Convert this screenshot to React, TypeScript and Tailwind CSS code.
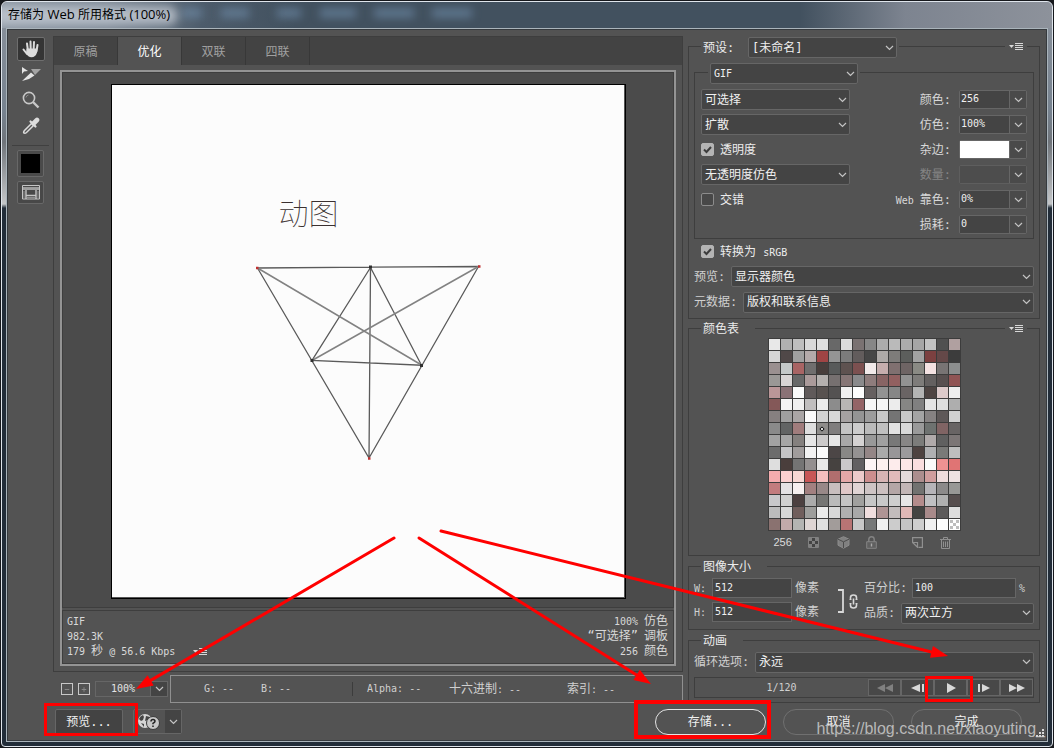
import { useId } from "react";
import type { ReactNode } from "react";

const SWATCHES = [
  "e8e8e8 b0b0b0 bebebe d8d8d8 dedede 686868 dcdcdc 7a7272 868686 acacac bababa acacac a6a6a6 c2c2c2 505050 b0a0a0",
  "d6d6d6 504848 a0a0a0 b4aaaa a04444 949494 7c7c7c 625c5c 464646 aeaaa8 7e7c7a 5c5e5c a2a2a2 7c4040 644848 3c3c3c",
  "9a9090 c4c8c8 a86464 706e6e 483e3c 585a5a 5e5250 7c5050 f2eaea c6aeae 807070 6e6464 8a8a84 f4e2e2 787474 8c8e8e",
  "9a9896 d8d4d4 686868 aa9a9a b4b0ae 767070 867676 8a8a8c 8e7c7c 886464 926060 929292 7e7c7a 646060 585050 905454",
  "ba9698 8a7276 fafafa 605a5a 585250 545252 f0f0f0 fdfdfd 666060 929292 868686 6a6464 b4b4b4 4e4442 dccaca eeeeee",
  "845858 f4f4f4 f0f0f0 c0bebe ebebeb 8c8c8c b8b6b4 946466 f6f6f6 f6f6f6 ececec 868684 808080 e4e4e4 dedede aeaeae",
  "868080 a0a0a0 aaa6a6 fbfbfb d2d2d2 d8d8d8 a6a2a2 949494 9c9c9c c8c8c8 747474 c8c8c8 a4a4a4 868282 5e5858 d0d0d0",
  "8a8a8a 626464 a07c7c dedede 8e8c8a 807e7e c4c4c4 cccccc bababa c0c0c0 e2e2e2 d8d8d8 9a9a9a 6e7270 806464 686464",
  "a2a2a2 a6a6a6 84807e e6e6e6 cccaca e6e6e6 a8a8a8 d4d2d2 989898 a0a0a0 787878 888686 7c7c7a b0aaaa 606060 7c7676",
  "6c6c6c c4c4c6 a09c9c f2f2f2 fafafa 4c4646 888886 949292 948686 aaaaaa 989698 9c9a9c 4e4240 b0b0b2 7a7a78 bebebe",
  "dedede 4a3e3c 747474 949090 e8e8e8 464240 cac8ca 626062 fdf5f5 fdf1ef fdecec fce6e6 fadedf fbfbfb ee9292 e07474",
  "f4acae fad0d0 f8d8d4 c85656 f4bebe b06e6e e4a8a8 eccaca cc8e8e d6b4b4 e0baba e4dada ac8e8e d09e9e eedcdc eee2e2",
  "c27c7e e4e2e4 f6f0f0 a28080 988888 c8bebe e0c8c8 e0d4d4 cec4c4 ccc0c0 b4a6a6 c2b6b6 727270 b6b4b8 8c8a8a 989896",
  "c8c8ca d0d0d0 4c4040 ababab 767674 bababa c4c4c4 a0a09e c6c6c6 c8c8c8 cecece e6e6e6 b48c8c c0c0c2 b0b0b0 564e4e",
  "bcbcbc d8d8d8 705e5c 9e9e9c ebebeb d8d8d8 b0b0b0 a8a8a8 f0dede ae9494 c2bcbc dfb8b6 444442 a88a8a 5c5a5a dedede",
  "8a7270 c2aaaa b4b4b2 dfd6d4 e0e0e0 a29c9a b87474 c8c8c8 767878 f0f0f0 cccccc c4c4c4 cecece f0f0f0 fdfdfd ffffff",
].flatMap((row) => row.split(" "));

const LOCKED = 7 * 16 + 4;

function Chevron() {
  return (
    <svg width="9" height="6" viewBox="0 0 9 6" fill="none" stroke="#c4c4c4" strokeWidth="1.2" aria-hidden>
      <path d="M1 1l3.5 3.5L8 1" />
    </svg>
  );
}

function Dropdown({ value, label, className = "", id }: { value: string; label?: string; className?: string; id?: string }) {
  const latin = /^[\x20-\x7e]+$/.test(value);
  return (
    <div className={`relative h-[21px] ${className}`}>
      <select
        id={id}
        aria-label={label}
        className={`block h-full w-full appearance-none rounded-xs border border-[#666] bg-[#444] pr-4 pl-[3px] text-[#f0f0f0] outline-none ${latin ? "text-[10px]" : "text-xs"}`}
      >
        <option>{value}</option>
      </select>
      <span className="pointer-events-none absolute inset-y-0 right-[3px] flex items-center">
        <Chevron />
      </span>
    </div>
  );
}

function SpinField({ label, value, disabled = false, matte = false }: { label: ReactNode; value: string; disabled?: boolean; matte?: boolean }) {
  const id = useId();
  return (
    <div className="flex items-center gap-2">
      <label htmlFor={id} className={disabled ? "text-[#858585]" : "text-[#d8d8d8]"}>
        {label}
      </label>
      <div className={`flex h-[19px] w-[68px] rounded-xs border ${disabled ? "border-[#5e5e5e]" : "border-[#666]"}`}>
        <input
          id={id}
          defaultValue={value}
          disabled={disabled}
          className={`w-[50px] min-w-0 border-r border-[#666] pb-[2px] pl-px text-[10px] text-[#f0f0f0] outline-none ${matte ? "bg-white" : disabled ? "bg-[#4d4d4d]" : "bg-[#444]"}`}
        />
        <button type="button" aria-label="▾" className="flex flex-1 items-center justify-center bg-[#4a4a4a]">
          <Chevron />
        </button>
      </div>
    </div>
  );
}

function Check({ children, checked = false }: { children: ReactNode; checked?: boolean }) {
  return (
    <label className="flex items-center gap-[6px] text-[#ececec]">
      <span className="relative flex">
        <input
          type="checkbox"
          defaultChecked={checked}
          className="peer size-[13px] appearance-none rounded-xs border border-[#8c8c8c] bg-[#484848] checked:border-[#b4b4b4] checked:bg-[#b4b4b4]"
        />
        <svg className="pointer-events-none absolute inset-0 hidden peer-checked:block" width="13" height="13" viewBox="0 0 13 13" fill="none" stroke="#3c3c3c" strokeWidth="2">
          <path d="M3 6.5l2.5 2.5L10 4" />
        </svg>
      </span>
      {children}
    </label>
  );
}

function MenuIcon() {
  return (
    <svg width="14" height="8" viewBox="0 0 14 8" fill="#d8d8d8" aria-hidden>
      <path d="M0 2h5L2.500 5z" />
      <path d="M6 0h8v1H6zM6 2h8v1H6zM6 4h8v1H6zM6 6h8v1H6z" />
    </svg>
  );
}

function Group({ title, menu = false, className = "", children }: { title: ReactNode; menu?: boolean; className?: string; children: ReactNode }) {
  return (
    <section className={`border border-[#3e3e3e] ${className}`}>
      <header className="mx-[12px] -mt-[10px] flex h-[19px] items-center justify-between text-[#ececec]">
        <div className="flex h-[19px] items-center bg-[#535353] pl-[2px]">{title}</div>
        {menu && (
          <button type="button" aria-label="☰" className="bg-[#535353] px-1 py-[5px]">
            <MenuIcon />
          </button>
        )}
      </header>
      {children}
    </section>
  );
}

function Latin({ children }: { children: ReactNode }) {
  return <span className="text-[10px]">{children}</span>;
}

function FieldRow({ label, value, labelWidth, className = "h-[26px]" }: { label: string; value: string; labelWidth: string; className?: string }) {
  const id = useId();
  return (
    <div className={`flex items-center px-[5px] ${className}`}>
      <label htmlFor={id} className={`shrink-0 text-[#d0d0d0] ${labelWidth}`}>
        {label}
      </label>
      <Dropdown id={id} value={value} className="flex-1" />
    </div>
  );
}

function SizeInput({ label, value, unit, width, labelWidth }: { label: ReactNode; value: string; unit: string; width: string; labelWidth: string }) {
  const id = useId();
  return (
    <div className="flex h-6 items-center text-[#d0d0d0]">
      <label htmlFor={id} className={`shrink-0 ${labelWidth}`}>
        {label}
      </label>
      <input id={id} defaultValue={value} className={`h-5 min-w-0 border border-[#666] bg-[#444] pb-[2px] pl-[2px] text-[10px] text-[#f0f0f0] outline-none ${width}`} />
      <span className="pl-[3px]">{unit === "%" ? <Latin>%</Latin> : unit}</span>
    </div>
  );
}

function Toolbar() {
  return (
    <nav className="flex w-[45px] shrink-0 flex-col items-center pt-[7px]">
      <button type="button" aria-label="抓手" className="flex h-6 w-7 items-center justify-center rounded-xs border border-[#6e6e6e] bg-[#353535]">
        <svg width="18" height="18" viewBox="0 0 18 18" fill="#dcdcdc" stroke="#dcdcdc" strokeLinecap="round" aria-hidden>
          <path d="M4.500 8.500h11l-.5 4q-1.500 4.800-5.500 4.800-3.500 0-5.500-4.300z" stroke="none" />
          <path fill="none" strokeWidth="2" d="M1.500 9.500L5 14M5 3.500l.8 6M8.500 1.500l.2 8M12 2l-.4 8M15.500 5l-1 6" />
        </svg>
      </button>
      <button type="button" aria-label="切片选择" className="flex h-[26px] w-7 items-center justify-center">
        <svg width="20" height="15" viewBox="0 0 20 15" aria-hidden>
          <path d="M1 0l6 4-4 .5L1 7z" fill="#e4e4e4" />
          <path d="M10 2h10l-6 6z" fill="#a4a4a4" />
          <path d="M1 14L10 5.500l3.500 3L8 12z" fill="#e4e4e4" />
        </svg>
      </button>
      <button type="button" aria-label="缩放" className="flex h-[26px] w-7 items-center justify-center">
        <svg width="18" height="18" viewBox="0 0 18 18" fill="none" stroke="#c8c8c8" aria-hidden>
          <circle cx="7" cy="7" r="5.600" strokeWidth="1.600" />
          <path d="M11 11l5.500 5.500" strokeWidth="2.400" />
          <path d="M4 6.500a3 3 0 012.500-2.500" stroke="#8c8c8c" />
        </svg>
      </button>
      <button type="button" aria-label="吸管" className="flex h-[26px] w-7 items-center justify-center">
        <svg width="18" height="18" viewBox="0 0 18 18" fill="none" stroke="#dcdcdc" aria-hidden>
          <path d="M10 6l-7.500 7.500q-1.500 2-.5 2.500 1 .8 2.500-.5L12 8" strokeWidth="1.500" />
          <path d="M8.500 4.500l5 5" strokeWidth="2.200" strokeLinecap="round" />
          <path d="M11.500 6.500L15 3" strokeWidth="4.600" strokeLinecap="round" />
        </svg>
      </button>
      <hr className="mt-[6px] mb-1 w-[37px] border-[#404040]" />
      <button type="button" aria-label="吸管颜色" className="flex size-[27px] items-center justify-center rounded-xs border border-[#686868] bg-[#4a4a4a]">
        <span className="size-[19px] bg-black" />
      </button>
      <button type="button" aria-label="切换切片" className="mt-1 flex h-[23px] w-[27px] items-center justify-center rounded-xs border border-[#686868] bg-[#484848]">
        <svg width="18" height="15" viewBox="0 0 18 15" fill="none" stroke="#c4c4c4" aria-hidden>
          <path d="M.5.500h17v13.500H.5z" />
          <path d="M1 2.500h16" stroke="#9a9a9a" />
          <path d="M0 4h18" strokeWidth="1.400" />
          <path d="M4 5v9M14 5v9M4 10.500h10" strokeWidth="1.400" />
          <path d="M2 6v7M16 6v7M5 12.500h8" stroke="#8c8c8c" />
        </svg>
      </button>
    </nav>
  );
}

function Artwork() {
  return (
    <div className="relative h-[515px] w-[515px] border border-black bg-[#fcfcfc] shadow-[inset_-1px_-1px_0_#555]">
      <span className="absolute top-[109px] left-[167px] text-[30px] leading-[40px] font-thin text-[#3a3030]">动图</span>
      <svg className="absolute top-0 left-0" width="513" height="513" viewBox="0 0 513 513" fill="none" aria-hidden>
        <g transform="translate(-112 -85)">
          <path d="M257.500 268l113-.8 108-.7L369 458zM370.500 267.500L312 360.500l109.500 4.700zM370.500 267.500L369 458" stroke="#5a5a5a" strokeWidth="1.300" />
          <path d="M257.500 268l164 97M478.500 266.500l-166.500 94" stroke="#828282" strokeWidth="1.500" />
          <path d="M369 267h3M310.500 360.500h3M420 365.500h3" stroke="#303030" strokeWidth="3" />
          <path d="M256 268h2.500M478 266.500h2.500M368 458.500h2.500" stroke="#c03030" strokeWidth="2.500" />
        </g>
      </svg>
    </div>
  );
}

const TABS = ["原稿", "优化", "双联", "四联"];

function Preview() {
  return (
    <div className="border border-[#3e3e3e]">
      <div className="flex h-7 bg-[#434343]" role="tablist">
        {TABS.map((tab) => (
          <button
            key={tab}
            type="button"
            role="tab"
            aria-selected={tab === "优化"}
            className="w-16 border-r border-[#383838] pt-px text-[#a0a0a0] aria-selected:bg-[#535353] aria-selected:text-white"
          >
            {tab}
          </button>
        ))}
      </div>
      <div className="mx-[6px] mt-[5px] mb-[5px] border-2 border-[#949494]">
        <div className="flex justify-center border border-[#3e3e3e] bg-[#4b4b4b] pt-[11px] pb-[8px]">
          <Artwork />
        </div>
        <div className="mt-[2px] flex justify-between border border-[#3e3e3e] pt-[3px] pr-[5px] pb-1 pl-1 leading-[15px] text-[#d8d8d8]">
          <div>
            <p className="text-[10px] leading-[15px]">GIF</p>
            <p className="text-[10px] leading-[15px]">982.3K</p>
            <p className="flex h-[15px] items-center gap-[18px]">
              <span>
                <Latin>179 </Latin>秒<Latin> @ 56.6 Kbps</Latin>
              </span>
              <MenuIcon />
            </p>
          </div>
          <div className="text-right">
            <p className="h-[15px]">
              <Latin>100% </Latin>仿色
            </p>
            <p className="h-[15px]">“可选择”<Latin> </Latin>调板</p>
            <p className="h-[15px]">
              <Latin>256 </Latin>颜色
            </p>
          </div>
        </div>
      </div>
    </div>
  );
}

function StatusRow() {
  return (
    <div className="mt-[3px] flex h-[28px] items-center text-[#d0d0d0]">
      {["M3 5.500h5", "M3 5.500h5M5.500 3v5"].map((d) => (
        <button key={d} type="button" aria-label={d.length > 10 ? "+" : "−"} className="ml-[5px] flex size-3 items-center justify-center border border-[#c8c8c8] first:ml-2">
          <svg width="11" height="11" viewBox="0 0 11 11" stroke="#8c8c8c" aria-hidden>
            <path d={d} />
          </svg>
        </button>
      ))}
      <div className="mr-[2px] ml-[5px] flex h-4 w-[73px] border border-[#666]">
        <input aria-label="缩放级别" defaultValue="100%" className="w-[55px] min-w-0 border-r border-[#666] pl-[15px] text-[10px] text-[#e4e4e4] outline-none" />
        <button type="button" aria-label="▾" className="flex flex-1 items-center justify-center bg-[#444]">
          <Chevron />
        </button>
      </div>
      <div className="flex h-full flex-1 items-center border border-[#909090] pl-[33px]">
        <span className="w-[57px] text-[10px]">G: --</span>
        <span className="w-[91px] text-[10px]">B: --</span>
        <span className="w-[97px] border-l border-[#3c3c3c] pl-[14px] text-[10px]">Alpha: --</span>
        <span className="w-[118px]">
          十六进制<Latin>: --</Latin>
        </span>
        <span>
          索引<Latin>: --</Latin>
        </span>
      </div>
    </div>
  );
}

function OptimizeSettings() {
  return (
    <Group
      menu
      className="mt-4 pb-[3px]"
      title={
        <div className="mt-[2px] flex h-[21px] items-center bg-[#535353] pr-[2px]">
          <label htmlFor="preset" className="w-[45px]">
            预设:
          </label>
          <Dropdown id="preset" value="[未命名]" className="w-[149px]" />
        </div>
      }
    >
      <section className="mx-[5px] mt-4 border border-[#3e3e3e] pb-px">
        <div className="-mt-[10px] ml-[13px] w-[152px] bg-[#535353] px-[2px]">
          <Dropdown label="格式" value="GIF" />
        </div>
        <div className="mt-[3px] flex justify-between px-[6px]">
          <div className="w-[149px]">
            <div className="flex h-[25px] items-center">
              <Dropdown label="减低颜色深度算法" value="可选择" className="w-full" />
            </div>
            <div className="flex h-[25px] items-center">
              <Dropdown label="仿色算法" value="扩散" className="w-full" />
            </div>
            <div className="flex h-[25px] items-center">
              <Check checked>透明度</Check>
            </div>
            <div className="flex h-[25px] items-center">
              <Dropdown label="透明度仿色算法" value="无透明度仿色" className="w-full" />
            </div>
            <div className="flex h-[25px] items-center">
              <Check>交错</Check>
            </div>
          </div>
          <div className="grid auto-rows-[25px] items-center justify-items-end">
            <SpinField label="颜色:" value="256" />
            <SpinField label="仿色:" value="100%" />
            <SpinField label="杂边:" value="" matte />
            <SpinField label="数量:" value="" disabled />
            <SpinField
              label={
                <>
                  <Latin>Web </Latin>靠色:
                </>
              }
              value="0%"
            />
            <SpinField label="损耗:" value="0" />
          </div>
        </div>
      </section>
      <div className="flex h-[25px] items-center px-3">
        <Check checked>
          <span>
            转换为 <Latin>sRGB</Latin>
          </span>
        </Check>
      </div>
      <FieldRow label="预览:" value="显示器颜色" labelWidth="w-[37px]" className="h-[25px]" />
      <FieldRow label="元数据:" value="版权和联系信息" labelWidth="w-[49px]" />
    </Group>
  );
}

function ColorTable() {
  return (
    <Group menu title={<h2 className="pr-4">颜色表</h2>} className="mt-[9px]">
      <div className="mx-auto w-[193px]">
        <div className="grid grid-cols-16 gap-px bg-[#3c3c3c] p-px">
          {SWATCHES.map((color, i) => (
            <span key={i} className="flex h-[11px] items-center justify-center" style={{ backgroundColor: `#${color}` }}>
              {i === LOCKED && <span className="size-[4px] rotate-45 border border-black bg-white" />}
              {i === 255 && (
                <svg width="11" height="11" viewBox="0 0 11 11" fill="#bdbdbd" aria-hidden>
                  <path d="M1 1h3v3H1zM7 1h3v3H7zM4 4h3v3H4zM1 7h3v3H1zM7 7h3v3H7z" />
                </svg>
              )}
            </span>
          ))}
        </div>
        <div className="flex h-[23px] items-center pl-[6px] text-[#dcdcdc]">
          <span className="w-[34px] font-['Liberation_Sans'] text-[11px]">256</span>
          <button type="button" aria-label="透明">
            <svg width="11" height="11" viewBox="0 0 11 11" aria-hidden>
              <path d="M.5.500h10v10H.5z" fill="#444" stroke="#808080" />
              <path d="M1 1h3v3H1zM7 1h3v3H7zM4 4h3v3H4zM1 7h3v3H1zM7 7h3v3H7z" fill="#808080" />
            </svg>
          </button>
          <button type="button" aria-label="Web" className="ml-[18px]">
            <svg width="13" height="13" viewBox="0 0 13 13" fill="#808080" stroke="#8c8c8c" aria-hidden>
              <path d="M6.500.700l5.500 2.500v6l-5.500 3-5.500-3v-6z" />
              <path d="M1 3.200l5.500 2.600L12 3.200M6.500 6v6" fill="none" stroke="#4c4c4c" />
            </svg>
          </button>
          <button type="button" aria-label="锁定" className="ml-[16px]">
            <svg width="11" height="13" viewBox="0 0 11 13" fill="none" stroke="#848484" aria-hidden>
              <path d="M2.800 6V3.500Q2.800.800 5.500.800T8.200 3.500V6" strokeWidth="1.400" />
              <path d="M.7 5.700h9.600v6.600H.7z" fill="#606060" />
              <path d="M5.500 7.500v3" stroke="#aaa" strokeWidth="1.400" />
            </svg>
          </button>
          <button type="button" aria-label="新建" className="ml-[35px]">
            <svg width="11" height="11" viewBox="0 0 11 11" fill="none" stroke="#909090" aria-hidden>
              <path d="M.6 5V.7h9.800v9.600H6.500M.6 5.500h4.900v4.800zM.6 5.500l4.900 4.800" strokeWidth="1.200" />
            </svg>
          </button>
          <button type="button" aria-label="删除" className="ml-[17px]">
            <svg width="11" height="12" viewBox="0 0 11 12" fill="none" stroke="#909090" aria-hidden>
              <path d="M0 2.500h11M3.500 2V.5h4V2M1.500 3v8.500h8V3M3.500 4.500v5.500M5.500 4.500V10M7.500 4.500V10" />
            </svg>
          </button>
        </div>
      </div>
      <div className="h-px" />
    </Group>
  );
}

function ImageSize() {
  const id = useId();
  return (
    <Group title={<h2 className="pr-4">图像大小</h2>} className="mt-[10px] pb-[3px]">
      <div className="flex px-[5px]">
        <div className="w-[126px]">
          <SizeInput label={<Latin>W:</Latin>} value="512" unit="像素" width="w-[80px]" labelWidth="w-[18px]" />
          <SizeInput label={<Latin>H:</Latin>} value="512" unit="像素" width="w-[80px]" labelWidth="w-[18px]" />
        </div>
        <div className="flex w-[44px] items-center justify-end pr-[6px]">
          <svg width="20" height="24" viewBox="0 0 20 24" fill="none" stroke="#d8d8d8" aria-hidden>
            <path d="M0 1h5v22H0" strokeWidth="1.800" />
            <path d="M12.500 10V8.500q0-2.500 3-2.500t3 2.500V10M12.500 15v1.500q0 2.500 3 2.500t3-2.500V15M15.500 9.500v6" strokeWidth="1.600" />
            <path d="M11.500 10.500h2M17.500 10.500h2M11.500 14.500h2M17.500 14.500h2" />
          </svg>
        </div>
        <div className="flex-1">
          <SizeInput label="百分比:" value="100" unit="%" width="w-[104px]" labelWidth="w-[48px]" />
          <div className="flex h-[26px] items-center text-[#d0d0d0]">
            <label htmlFor={id} className="w-[37px] shrink-0">
              品质:
            </label>
            <Dropdown id={id} value="两次立方" className="flex-1" />
          </div>
        </div>
      </div>
    </Group>
  );
}

const PLAYBACK = [
  { label: "第一帧", d: "M8 0v8L0 4zM16 0v8L8 4z", dim: true },
  { label: "上一帧", d: "M10 0v8L1 4zM12 0h2v8h-2z" },
  { label: "播放", d: "M4-1l9 5-9 5z" },
  { label: "下一帧", d: "M2 0h2v8H2zM6 0l8 4-8 4z" },
  { label: "最后一帧", d: "M0 0l8 4-8 4zM8 0l8 4-8 4z" },
];

function Animation() {
  return (
    <Group title={<h2 className="pr-4">动画</h2>} className="mt-[10px] pb-[4px]">
      <FieldRow label="循环选项:" value="永远" labelWidth="w-[61px]" className="h-6" />
      <div className="mx-[5px] mt-[3px] flex h-[21px] items-center border border-[#3e3e3e]">
        <span className="flex-1 text-center text-[10px] text-[#d0d0d0]">1/120</span>
        {PLAYBACK.map(({ label, d, dim }) => (
          <button key={label} type="button" aria-label={label} className={`flex h-[17px] w-[33px] items-center justify-center border border-[#666] bg-[#484848] ${dim ? "text-[#808080]" : "text-[#d8d8d8]"}`}>
            <svg width="16" height="8" viewBox="0 0 16 8" fill="currentColor" className="overflow-visible" aria-hidden>
              <path d={d} />
            </svg>
          </button>
        ))}
      </div>
    </Group>
  );
}

function FooterBar() {
  return (
    <footer className="flex h-[37px] items-center pr-6 pl-[47px] text-[#f0f0f0]">
      <button type="button" className="mr-[10px] h-[26px] w-[68px] rounded-xs border border-[#666] bg-[#434343]">
        预览...
      </button>
      <div className="flex h-[25px] w-[49px] rounded-xs border border-[#666]">
        <button type="button" aria-label="浏览器预览" className="flex w-[31px] items-center pl-[3px]">
          <svg width="24" height="16" viewBox="0 0 24 16" aria-hidden>
            <circle cx="8" cy="7" r="7" fill="#d4d4d4" />
            <path d="M2 5q1-3 4-4l1 2-1 3-2 1zM9 2l4 1-2 3-3 1zM4 9l3 1v3z" fill="#444" />
            <circle cx="16" cy="9" r="6.500" fill="#c8c8c8" stroke="#3c3c3c" />
            <path d="M14 7.500q0-2 2-2t2 1.800q0 1-2 2v1M16 11.500v1.500" fill="none" stroke="#222" strokeWidth="1.500" />
          </svg>
        </button>
        <button type="button" aria-label="▾" className="flex flex-1 items-center justify-center bg-[#444]">
          <Chevron />
        </button>
      </div>
      <div className="ml-auto flex gap-[17px]">
        <button type="button" className="h-[26px] w-[111px] rounded-full border border-[#e4e4e4]">
          存储...
        </button>
        <button type="button" className="h-[26px] w-[111px] rounded-full border border-[#707070]">
          取消
        </button>
        <button type="button" className="h-[26px] w-[111px] rounded-full border border-[#707070]">
          完成
        </button>
      </div>
    </footer>
  );
}

function Arrow({ from, to }: { from: [number, number]; to: [number, number] }) {
  const length = Math.hypot(to[0] - from[0], to[1] - from[1]);
  const ux = (to[0] - from[0]) / length;
  const uy = (to[1] - from[1]) / length;
  const bx = to[0] - ux * 17;
  const by = to[1] - uy * 17;
  return (
    <g>
      <path d={`M${from[0]} ${from[1]}L${bx} ${by}`} stroke="red" strokeWidth="3" strokeLinecap="round" />
      <path d={`M${to[0]} ${to[1]}L${bx - uy * 6} ${by + ux * 6}L${bx + uy * 6} ${by - ux * 6}z`} fill="red" />
    </g>
  );
}

function Annotations() {
  return (
    <svg className="pointer-events-none absolute top-0 left-0" width="1054" height="748" viewBox="0 0 1054 748" fill="none" aria-hidden>
      <Arrow from={[394, 538]} to={[136, 689]} />
      <Arrow from={[419, 538]} to={[651, 684]} />
      <Arrow from={[441, 531]} to={[948, 656]} />
      <g stroke="red">
        <path d="M45.500 704.500h91v30h-91zM926.500 677.500h45v23h-45z" strokeWidth="3" />
        <path d="M636 702h133v35H636z" strokeWidth="4" />
      </g>
    </svg>
  );
}

const MENU_BLURS = ["left-[180px] w-5", "left-[219px] w-7", "left-[275px] w-6", "left-[318px] w-9", "left-[372px] w-10", "left-[430px] w-10"];

export default function App() {
  return (
    <div className="relative flex min-h-screen flex-col bg-[#16181c] p-px font-['DejaVu_Sans_Mono','Noto_Sans_CJK_SC',monospace] text-xs">
      <div className="flex flex-1 flex-col rounded-t-md rounded-b-sm border border-[#dfe5ec] bg-[linear-gradient(to_bottom,#8b929c_0px,#76828f_110px,#6f747a_140px,#c4c6c8_202px,#222d39_206px)]">
        <header className="relative flex h-[26px] items-center overflow-hidden rounded-t-md bg-[linear-gradient(to_right,#8b96a2_0%,#7c8895_10%,#4d5c6b_19%,#42515f_28%,#42515f_76%,#7d8490_86%,#8d929b_100%)] pl-[6px] font-['Open_Sans','Noto_Sans_CJK_SC',sans-serif]">
          <div className="absolute top-[4px] left-[-10px] h-[19px] w-[186px] rounded-full bg-[#c4cbd3]/80 blur-[5px]" />
          {MENU_BLURS.map((place) => (
            <div key={place} className={`absolute top-[6px] h-[10px] bg-[#7898b8]/50 blur-[4px] ${place}`} />
          ))}
          <h1 className="relative text-black">
            存储为<span className="text-[13px]"> Web </span>所用格式<span className="text-[13px]"> (100%)</span>
          </h1>
        </header>
        <main className="mx-1 mb-1 flex-1 border border-[#aab4bb]">
          <div className="relative h-full border border-[#363a3e] bg-[#535353]">
            <div className="flex">
              <Toolbar />
              <div className="mr-[5px] min-w-0 flex-1 pt-[6px]">
                <Preview />
                <StatusRow />
              </div>
              <div className="mr-[6px] w-[352px] shrink-0">
                <OptimizeSettings />
                <ColorTable />
                <ImageSize />
                <Animation />
              </div>
            </div>
            <FooterBar />
            <svg className="absolute right-[2px] bottom-[2px]" width="9" height="9" viewBox="0 0 9 9" fill="#d8d8d8" aria-hidden>
              <path d="M7 0h2v2H7zM4 3h2v2H4zM7 3h2v2H7zM1 6h2v2H1zM4 6h2v2H4zM7 6h2v2H7z" />
            </svg>
          </div>
        </main>
      </div>
      <Annotations />
      <span className="pointer-events-none absolute right-[9px] bottom-[7px] font-['Liberation_Sans',sans-serif] text-base text-[#d4d4d4]/80">https://blog.csdn.net/xiaoyuting_</span>
    </div>
  );
}
